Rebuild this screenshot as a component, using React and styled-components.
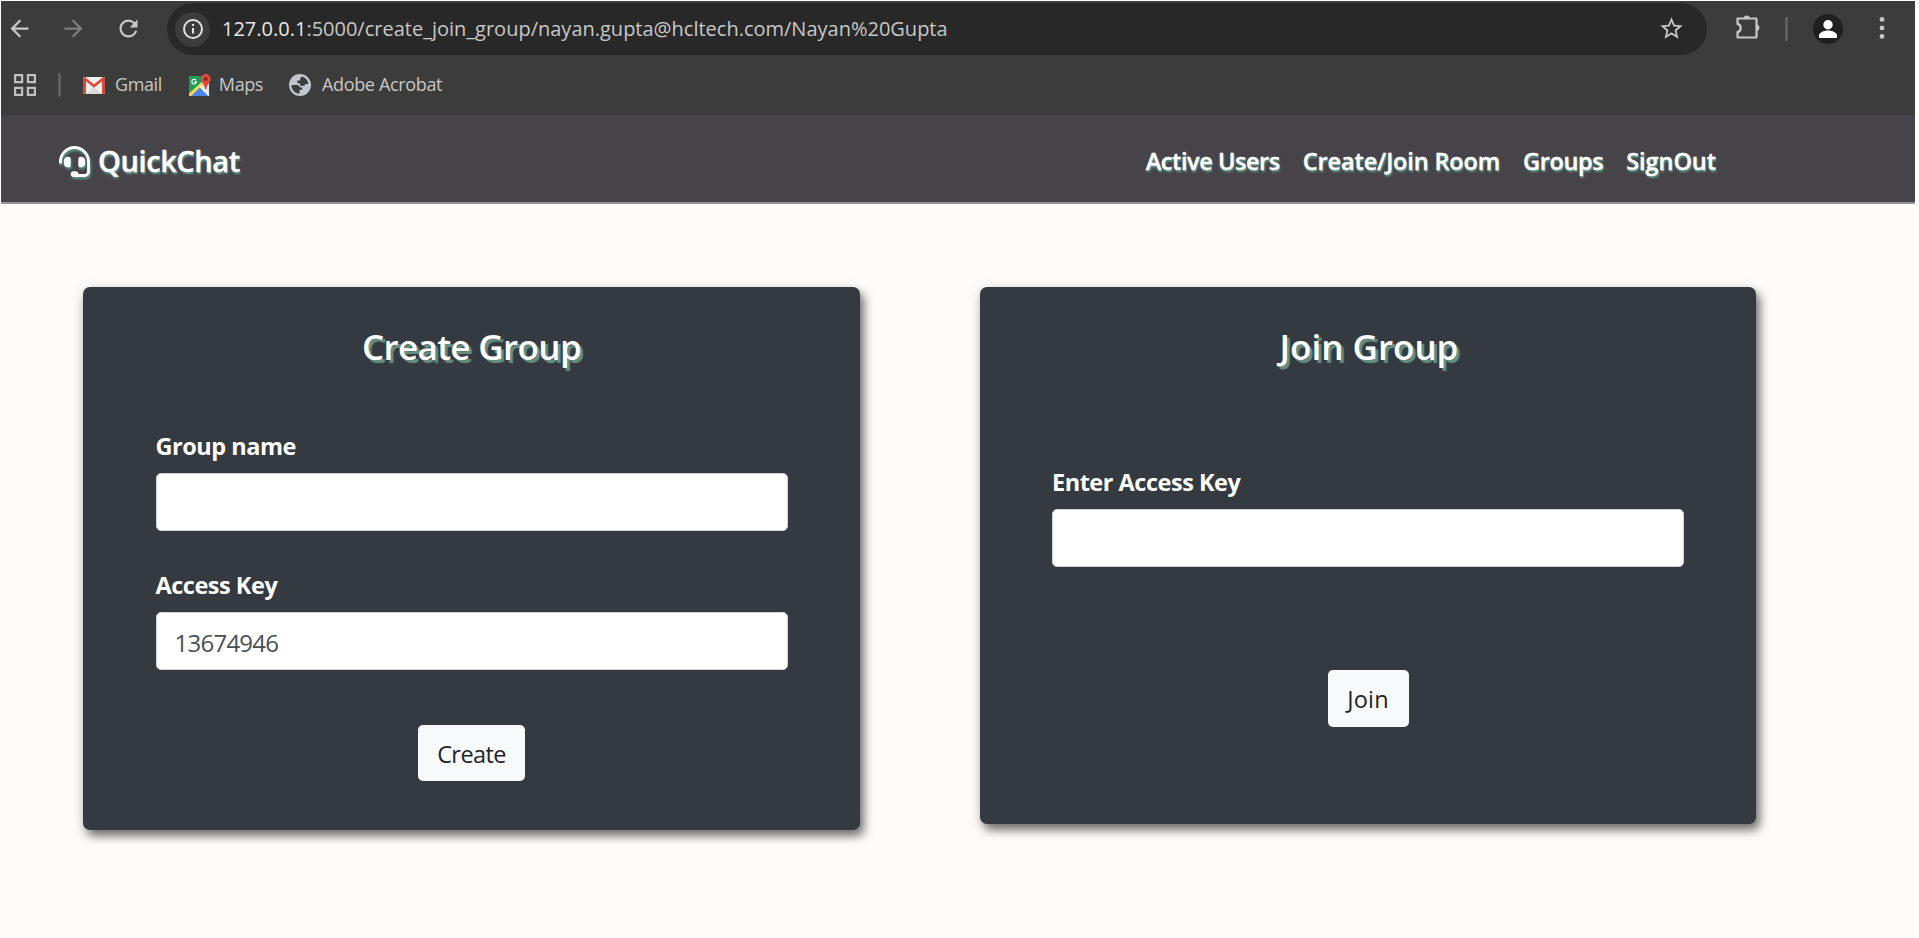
import React from "react";
import styled, { createGlobalStyle } from "styled-components";
import { FaHeadset } from "react-icons/fa";
import { MdArrowBack, MdArrowForward, MdRefresh, MdStarBorder } from "react-icons/md";

const GlobalStyle = createGlobalStyle`
  * { box-sizing: border-box; }
  body {
    margin: 0;
    background: #fff;
    font-family: "Open Sans", "Noto Sans", sans-serif;
  }
`;

const Window = styled.div`
  display: flex;
  flex-direction: column;
  width: 1919px;
  height: 938px;
  padding: 1px 4px 0 1px;
  overflow: hidden;
`;

const Chrome = styled.div`
  flex: none;
  height: 114px;
  background: #3c3c3c;
  color: #c7c7c7;
`;

const Toolbar = styled.div`
  display: flex;
  align-items: center;
  height: 56px;
  padding: 0 0 2px 4px;
`;

const ToolIcon = styled.span`
  display: flex;
  align-items: center;
  justify-content: center;
  flex: none;
  width: 28px;
  margin-left: ${(p) => p.$gap || 0}px;
  padding-bottom: ${(p) => p.$lift || 0}px;
  font-size: 27px;
  color: ${(p) => (p.$dim ? "#7d7d7d" : "#c7c7c7")};
`;

const AddressBar = styled.div`
  display: flex;
  align-items: center;
  flex: none;
  width: 1540px;
  height: 52px;
  margin: 2px 0 0 25px;
  padding: 0 22px 0 8px;
  border-radius: 26px;
  background: #282828;
`;

const SiteInfo = styled.span`
  display: flex;
  align-items: center;
  justify-content: center;
  width: 35px;
  height: 35px;
  border-radius: 50%;
  background: #3c3c3c;
`;

const Url = styled.span`
  flex: 1;
  margin-left: 12px;
  padding-bottom: 1px;
  font-size: 20px;
  line-height: 50px;
  color: #c7c7c7;
`;

const Host = styled.span`
  color: #e8e8e8;
`;

const Divider = styled.span`
  flex: none;
  width: 3px;
  height: 24px;
  margin: ${(p) => p.$margin};
  border-radius: 1px;
  background: #5e5e5e;
`;

const Avatar = styled.span`
  display: flex;
  flex: none;
  width: 30px;
  height: 30px;
  margin-top: 2px;
  border-radius: 50%;
  background: #1f1f1f;
`;

const Bookmarks = styled.div`
  display: flex;
  align-items: center;
  height: 56px;
  padding-left: 13px;
`;

const Bookmark = styled.span`
  display: flex;
  align-items: center;
  gap: ${(p) => p.$gap}px;
  margin-right: ${(p) => p.$after || 0}px;
  font-size: 18px;
  letter-spacing: ${(p) => p.$track}px;
`;

const BookmarkLabel = styled.span`
  padding-bottom: 2px;
  line-height: 28px;
`;

const NavBar = styled.nav`
  display: flex;
  align-items: center;
  justify-content: space-between;
  flex: none;
  height: 89px;
  padding: 5px 199px 0 58px;
  border-bottom: 2px solid #969294;
  background: #474449;
  color: #fff;
  font-weight: 600;
  -webkit-text-stroke: 0.4px #fff;
  text-shadow: 1px 2px 2px #5f9a8c;
`;

const Brand = styled.div`
  display: flex;
  align-items: center;
  gap: 8px;
  font-size: 29px;
  line-height: 40px;
  letter-spacing: -0.4px;

  svg {
    filter: drop-shadow(1px 2px 1px #5f9a8c);
  }
`;

const NavLinks = styled.div`
  display: flex;
  gap: 23px;
`;

const NavLink = styled.a`
  font-size: 23.5px;
  line-height: 36px;
  letter-spacing: ${(p) => p.$track}px;
`;

const Main = styled.main`
  display: flex;
  align-items: flex-start;
  gap: 120px;
  flex: 1;
  padding: 83px 159px 0 82px;
  background: #fffbfa;
`;

const Card = styled.section`
  display: flex;
  flex-direction: column;
  width: ${(p) => p.$width}px;
  height: ${(p) => p.$height}px;
  padding: 36px 72px 0;
  border-radius: 7px;
  background: #343a40;
  box-shadow: 4px 6px 10px rgba(0, 0, 0, 0.5), 0 3px 14px rgba(0, 0, 0, 0.14);
`;

const CardTitle = styled.h2`
  margin: 0;
  padding-left: ${(p) => p.$indent || 0}px;
  color: #fff;
  font-size: 35px;
  font-weight: 600;
  line-height: 48px;
  text-align: center;
  letter-spacing: ${(p) => p.$track}px;
  text-shadow: 3px 3px 1px #668f82;
`;

const Field = styled.label`
  display: flex;
  flex-direction: column;
  align-self: center;
  gap: 9px;
  width: 632px;
  margin-top: ${(p) => p.$top}px;
  color: #fff;
  font-size: 23.5px;
  font-weight: 700;
  line-height: 36px;
  letter-spacing: -0.48px;
`;

const Input = styled.input`
  height: 58px;
  padding: 3px 18px 0;
  border: 1px solid #ced4da;
  border-radius: 5px;
  outline: none;
  background: #fff;
  color: #495057;
  font: 400 24px "Open Sans", "Noto Sans", sans-serif;
  letter-spacing: -0.75px;
`;

const Button = styled.button`
  align-self: center;
  width: ${(p) => p.$width}px;
  height: ${(p) => p.$height}px;
  margin-top: ${(p) => p.$top}px;
  padding: 1px 0 0;
  border: 0;
  border-radius: 5px;
  background: #f8f9fa;
  color: #212529;
  font: 400 23.5px/36px "Open Sans", "Noto Sans", sans-serif;
  letter-spacing: ${(p) => p.$track}px;
`;

const InfoIcon = () => (
  <svg width="22" height="22" viewBox="0 0 22 22" fill="none" stroke="#e3e3e3">
    <circle cx="11" cy="11" r="9" strokeWidth="2" />
    <path d="M11 10v5.5" strokeWidth="2" />
    <circle cx="11" cy="7" r="1.2" fill="#e3e3e3" stroke="none" />
  </svg>
);

const PuzzleIcon = () => (
  <svg width="26" height="26" viewBox="0 0 26 26">
    <path
      d="M1.500 4.500h19v19h-19v-5.400c4.200-.6 4.200-7.600 0-8.200z"
      fill="none"
      stroke="#c7c7c7"
      strokeWidth="2.2"
      strokeLinejoin="round"
    />
    <path d="M7.500 4a3.300 3.300 0 0 1 6.400 0zM21 10.600a3.300 3.300 0 0 1 0 6.400z" fill="#c7c7c7" />
  </svg>
);

const PersonIcon = () => (
  <svg width="30" height="30" viewBox="0 0 30 30" fill="#fff">
    <circle cx="15" cy="10.8" r="4.7" />
    <path d="M6 24v-2.600c0-2.800 4.500-5 9-5s9 2.200 9 5V24z" />
  </svg>
);

const DotsIcon = () => (
  <svg width="6" height="24" viewBox="0 0 6 24" fill="#c7c7c7">
    <circle cx="3" cy="3.4" r="2.4" />
    <circle cx="3" cy="11.9" r="2.4" />
    <circle cx="3" cy="20.4" r="2.4" />
  </svg>
);

const AppsIcon = () => (
  <svg width="22" height="22" viewBox="0 0 22 22" fill="none" stroke="#c0c0c0" strokeWidth="2.2">
    <path d="M1.100 1.100h7v7h-7zM13.900 1.100h7v7h-7zM1.100 13.900h7v7h-7zM13.900 13.900h7v7h-7z" />
  </svg>
);

const GmailIcon = () => (
  <svg width="22" height="17" viewBox="0 0 22 17">
    <rect width="22" height="17" rx="1.5" fill="#f1eeee" />
    <path d="M3 17l8-7 8 7z" fill="#dcdada" />
    <path d="M0 1.500Q0 0 1.500 0L3 .8V17H1.500Q0 17 0 15.500zM22 1.500Q22 0 20.500 0L19 .8V17h1.500q1.500 0 1.500-1.500z" fill="#d54b3f" />
    <path d="M1.300 1.300L11 9l9.700-7.700" fill="none" stroke="#d54b3f" strokeWidth="2.7" />
  </svg>
);

const MapsIcon = () => (
  <svg width="22" height="22" viewBox="0 0 22 22">
    <rect y="2" width="20" height="20" rx="1.5" fill="#e9e9e9" />
    <path d="M0 3.500Q0 2 1.500 2H15L12 11 0 21z" fill="#1f9d58" />
    <path d="M1.500 22L11 12.800 20 22z" fill="#4a86ee" />
    <path d="M0 19.500L12.500 8l2 2L2 22H1q-1 0-1-1z" fill="#fbd64a" />
    <path d="M11 12.500l9 9" stroke="#fff" strokeWidth="1.6" />
    <path d="M7 6.200a2.300 2.300 0 1 0 .4 1.700H5.200" fill="none" stroke="#fff" strokeWidth="1.1" />
    <path d="M16.800 0a4.900 4.900 0 0 1 4.900 4.900c0 3.600-3.700 4.600-4.300 10.600h-1.200c-.6-6-4.300-7-4.300-10.600A4.900 4.900 0 0 1 16.800 0z" fill="#dc4a3d" />
    <circle cx="16.8" cy="4.9" r="1.8" fill="#7c2018" />
  </svg>
);

const GlobeIcon = () => (
  <svg width="22" height="22" viewBox="0 0 22 22">
    <circle cx="11" cy="11" r="11" fill="#c3c6cb" />
    <path
      d="M12.800 2.400c3.600.8 6.200 3.800 6.600 7.600h-2.600l-1.600 1.800h-4.200V9.200H8.400V6.400h2.800V4.600zM2.400 11h6.400l2.400 2.400h2v2.400h-2.600v3.800C6 19.600 2.400 15.800 2.400 11z"
      fill="#3c3c3c"
    />
  </svg>
);

export default function App() {
  return (
    <Window>
      <GlobalStyle />
      <Chrome>
        <Toolbar>
          <ToolIcon><MdArrowBack /></ToolIcon>
          <ToolIcon $gap={26} $dim><MdArrowForward /></ToolIcon>
          <ToolIcon $gap={27}><MdRefresh /></ToolIcon>
          <AddressBar>
            <SiteInfo><InfoIcon /></SiteInfo>
            <Url><Host>127.0.0.1</Host>:5000/create_join_group/nayan.gupta@hcltech.com/Nayan%20Gupta</Url>
            <ToolIcon $lift={2}><MdStarBorder /></ToolIcon>
          </AddressBar>
          <ToolIcon $gap={28} $lift={2}><PuzzleIcon /></ToolIcon>
          <Divider $margin="2px 25px 0 22px" />
          <Avatar><PersonIcon /></Avatar>
          <ToolIcon $gap={25}><DotsIcon /></ToolIcon>
        </Toolbar>
        <Bookmarks>
          <AppsIcon />
          <Divider $margin="0 22px 0 22px" />
          <Bookmark $gap={10} $after={27} $track={-0.4}>
            <GmailIcon /><BookmarkLabel>Gmail</BookmarkLabel>
          </Bookmark>
          <Bookmark $gap={8} $after={26} $track={-0.4}>
            <MapsIcon /><BookmarkLabel>Maps</BookmarkLabel>
          </Bookmark>
          <Bookmark $gap={11} $track={-0.35}>
            <GlobeIcon /><BookmarkLabel>Adobe Acrobat</BookmarkLabel>
          </Bookmark>
        </Bookmarks>
      </Chrome>
      <NavBar>
        <Brand><FaHeadset size={31} />QuickChat</Brand>
        <NavLinks>
          <NavLink $track={-0.43}>Active Users</NavLink>
          <NavLink $track={-0.13}>Create/Join Room</NavLink>
          <NavLink $track={-0.4}>Groups</NavLink>
          <NavLink $track={-0.05}>SignOut</NavLink>
        </NavLinks>
      </NavBar>
      <Main>
        <Card $width={777} $height={543}>
          <CardTitle $track={-0.63}>Create Group</CardTitle>
          <Field $top={57}>Group name<Input /></Field>
          <Field $top={36}>Access Key<Input defaultValue="13674946" /></Field>
          <Button $width={107} $height={56} $top={55} $track={-0.6}>Create</Button>
        </Card>
        <Card $width={776} $height={537}>
          <CardTitle $track={0} $indent={2}>Join Group</CardTitle>
          <Field $top={93}>Enter Access Key<Input /></Field>
          <Button $width={81} $height={57} $top={103} $track={0.2}>Join</Button>
        </Card>
      </Main>
    </Window>
  );
}
